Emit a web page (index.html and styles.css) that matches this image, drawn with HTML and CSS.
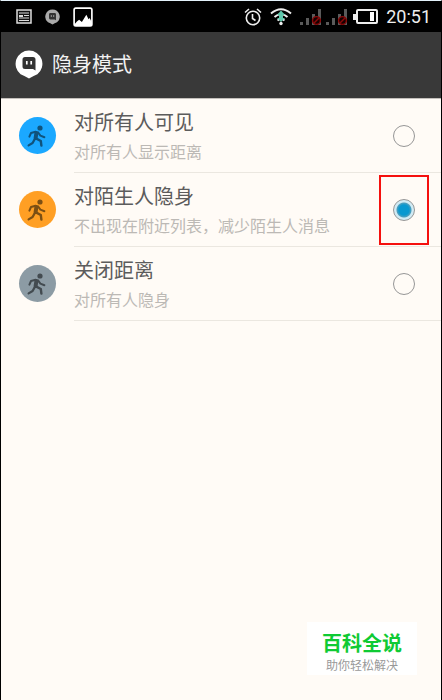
FILE: index.html
```html
<!DOCTYPE html>
<html lang="zh-CN">
<head>
<meta charset="utf-8">
<meta name="viewport" content="width=device-width, initial-scale=1">
<title>隐身模式</title>
<link rel="stylesheet" href="styles.css">
</head>
<body>
<svg class="defs" aria-hidden="true">
  <symbol id="walker" viewBox="0 0 37 37">
    <circle cx="21" cy="11" r="2.600" fill="currentColor"/>
    <g fill="none" stroke="currentColor" stroke-linecap="round" stroke-linejoin="round">
      <path d="M17.400 16L16.600 21" stroke-width="4"/>
      <path d="M16.600 14.800L12 16L10.400 19.600" stroke-width="2"/>
      <path d="M19 15.400L21.400 18.600L25.400 20.200" stroke-width="2"/>
      <path d="M15.600 22.400L13.600 26L9.600 28.400" stroke-width="2.200"/>
      <path d="M17.400 21.600L21.800 24L22.400 28.600" stroke-width="2.400"/>
    </g>
  </symbol>
  <symbol id="bubble" viewBox="0 0 28 29">
    <path d="M14 .5A13.300 13.300 0 0 1 22.400 24.200Q18 26 14 28.600Q10 26 5.600 24.200A13.300 13.300 0 0 1 14 .5Z" fill="currentColor"/>
    <path class="cut" d="M10 7H18Q20.500 7 20.500 9.500V20.500L18 19H10Q7.500 19 7.500 16.500V9.500Q7.500 7 10 7Z"/>
    <path d="M11.800 11v3.400M16.200 11v3.400" stroke="currentColor" stroke-width="1.700"/>
  </symbol>
  <symbol id="signal" viewBox="0 0 22 20">
    <path d="M0 15h3v3H0zM6 11h3v7H6zM12 7h3v11h-3zM18 2h3v16h-3z" fill="#5a5a5a"/>
    <circle cx="16.500" cy="13.500" r="3.900" fill="#160000" stroke="#8c0808" stroke-width="1.400"/>
    <path d="M19 11l-5 5" stroke="#8c0808" stroke-width="1.400"/>
  </symbol>
</svg>
<div class="screen">
  <div class="status">
    <div class="notices">
      <svg class="news" viewBox="0 0 16 15"><path d="M1 1h14v13H1z" fill="#111" stroke="#ddd" stroke-width="1.500"/><path d="M3 4h10M8 6.500h5M3 9h10M3 11.500h10" stroke="#ddd"/><path d="M3 6h4v2H3z" fill="#ddd"/></svg>
      <svg class="chat"><use href="#bubble"/></svg>
      <svg class="photo" viewBox="0 0 18 18"><rect x="1" y="1" width="16" height="16" rx="1.500" fill="#000" stroke="#fff" stroke-width="1.500"/><path d="M1 16L3.500 13L5.500 11.500L8 13.500L12 7L14 11L15 10L17 14V17H1Z" fill="#fff"/></svg>
    </div>
    <div class="system">
      <svg class="alarm" viewBox="0 0 18 18" fill="none" stroke="#eee" stroke-width="1.600"><circle cx="9" cy="10" r="6.700"/><path d="M8.500 6v4.500l3 2M1 4.500L5 1M17 4.500L13 1"/></svg>
      <svg class="wifi" viewBox="0 0 22 18"><g fill="none" stroke="#eee" stroke-width="2"><path d="M1 5.500Q11-3 21 5.500M4.500 9Q11 3.500 17.500 9M7.500 12.500Q11 9.500 14.500 12.500"/></g><path d="M11 2.500l4 4.500h-2v3h2l-4 4l-4-4h2V7H7z" fill="#5fc7ab"/><circle cx="11" cy="15.500" r="1.700" fill="#eee"/></svg>
      <svg class="bars"><use href="#signal"/></svg>
      <svg class="bars second"><use href="#signal"/></svg>
      <svg class="battery" viewBox="0 0 25 15"><rect x="4" y="1" width="20" height="13" rx="1" fill="#000" stroke="#eee" stroke-width="2"/><path d="M0 5h4v6H0z" fill="#eee"/><path d="M17 3h4v9h-4z" fill="#fff"/></svg>
      <time class="clock">20:51</time>
    </div>
  </div>
  <header class="bar">
    <svg class="logo"><use href="#bubble"/></svg>
    <h1>隐身模式</h1>
  </header>
  <main class="options">
    <label class="option">
      <svg class="avatar blue"><use href="#walker"/></svg>
      <span class="body">
        <span class="text"><span class="title">对所有人可见</span><span class="note">对所有人显示距离</span></span>
        <span class="pick"><input type="radio" name="mode"></span>
      </span>
    </label>
    <label class="option">
      <svg class="avatar orange"><use href="#walker"/></svg>
      <span class="body">
        <span class="text"><span class="title">对陌生人隐身</span><span class="note">不出现在附近列表，减少陌生人消息</span></span>
        <span class="pick marked"><input type="radio" name="mode" checked></span>
      </span>
    </label>
    <label class="option">
      <svg class="avatar gray"><use href="#walker"/></svg>
      <span class="body">
        <span class="text"><span class="title">关闭距离</span><span class="note">对所有人隐身</span></span>
        <span class="pick"><input type="radio" name="mode"></span>
      </span>
    </label>
  </main>
  <footer class="stamp"><strong>百科全说</strong><span>助你轻松解决</span></footer>
</div>
</body>
</html>
```
FILE: styles.css
```css
* { box-sizing: border-box; }
body {
  margin: 0;
  background: #fffbf6;
  font-family: "Noto Sans CJK SC", sans-serif;
}
svg { display: block; flex: none; }
.defs { position: absolute; width: 0; height: 0; }
.screen {
  display: flex;
  flex-direction: column;
  min-height: 100vh;
  border: 1px solid #000;
  border-top-color: #e4f2fa;
  border-bottom: 0;
}
.status {
  display: flex;
  align-items: center;
  justify-content: space-between;
  height: 31px;
  padding: 0 10px 0 15px;
  background: #000;
}
.notices, .system { display: flex; align-items: center; }
.notices { gap: 13px; }
.news { width: 16px; height: 15px; }
.chat { width: 15px; height: 16px; color: #aaa; }
.cut { fill: #333; }
.photo { width: 20px; height: 20px; }
.alarm { width: 18px; height: 18px; margin-right: 8px; }
.wifi { width: 22px; height: 18px; margin-right: 8px; }
.bars { width: 22px; height: 20px; margin-right: 4px; }
.second { margin-right: 5px; }
.battery { width: 25px; height: 15px; margin-right: 8px; }
.clock {
  color: #eee;
  font: 18px/24px Roboto, sans-serif;
}
.bar {
  display: flex;
  align-items: center;
  gap: 9px;
  height: 67px;
  padding: 0 14px 2px;
  background: #393939;
  border-bottom: 1px solid #c4c0bc;
}
.logo { width: 28px; height: 29px; color: #fff; }
h1 { margin: 0; font-size: 20px; font-weight: 400; line-height: 28px; color: #f2f2f2; }
.option { display: flex; align-items: center; padding-left: 18px; }
.avatar { width: 37px; height: 37px; margin: 0 18px 2px 0; border-radius: 50%; }
.blue { background: #1ba8ff; color: #10537c; }
.orange { background: #ff9f24; color: #7c4f14; }
.gray { background: #8c9ba4; color: #434b50; }
.body {
  display: flex;
  flex: 1;
  align-items: center;
  justify-content: space-between;
  min-height: 74px;
  border-bottom: 1px solid #ebe7e0;
}
.text { display: flex; flex-direction: column; }
.title { font-size: 20px; line-height: 30px; color: #5c5c5c; }
.note { font-size: 16px; line-height: 28px; color: #bcb9b5; }
.pick {
  position: relative;
  display: flex;
  margin-right: 26px;
}
.pick input {
  appearance: none;
  width: 22px;
  height: 22px;
  margin: 0;
  border: 1px solid #969696;
  border-radius: 50%;
}
.pick input:checked {
  background: radial-gradient(circle, #0898d0 5px, #4c9fbe 7px, #d2ebf4 8px);
}
.marked::after {
  content: "";
  position: absolute;
  inset: -24px -14px;
  border: 2px solid #f5100e;
}
.stamp {
  display: flex;
  flex-direction: column;
  align-items: center;
  align-self: flex-end;
  margin: auto 24px 25px 0;
  padding: 6px 15px 3px;
  background: #fff;
}
.stamp strong { font-size: 20px; line-height: 30px; font-weight: 700; color: #0fca34; }
.stamp span { font-size: 12px; line-height: 14px; color: #999; }
```
